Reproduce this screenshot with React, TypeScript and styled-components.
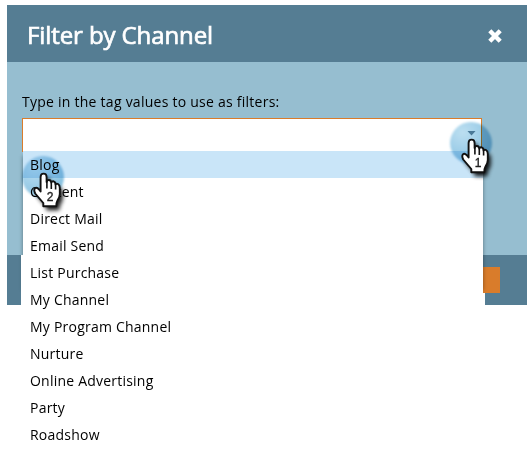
import React from "react";
import styled, { createGlobalStyle } from "styled-components";

const Global = createGlobalStyle`
  * { box-sizing: border-box; }
  body { margin: 0; background: #fff; overflow: hidden; font-family: "Open Sans", sans-serif; color: #000; }
`;
const Page = styled.main`
  width: 531px; height: 463px; padding: 5px 4px 0 7px; position: relative; overflow: hidden;
`;
const Dialog = styled.section`
  height: 300px; display: flex; flex-direction: column; background: #96bed0;
`;
const Header = styled.header`
  height: 57px; padding: 0 25px 0 20px; background: #557d93;
  display: flex; align-items: center; justify-content: space-between;
`;
const Title = styled.h1`
  margin: 0; padding-top: 3px; color: #fff; font-size: 24px; font-weight: 400; line-height: 32px;
  letter-spacing: -0.1px; -webkit-text-stroke: 0.7px #fff;
`;
const CloseButton = styled.button`
  width: 14px; height: 14px; margin-top: 5px; padding: 0; border: 0; background: none; display: block;
  svg { display: block; }
`;
const Body = styled.div`
  flex: 1; padding: 30px 15px 0;
`;
const Label = styled.label`
  display: block; height: 26px; font-size: 14px; line-height: 20px; letter-spacing: 0.25px;
`;
const Combo = styled.div`
  position: relative; width: 460px;
`;
const Field = styled.div`
  height: 34px; border: 1px solid #d97c2b; border-bottom: 0; background: #fff;
  display: flex; justify-content: flex-end; padding: 12px 5px 0 0;
  svg { display: block; }
`;
const Menu = styled.ul`
  position: absolute; top: 33px; left: 1px; z-index: 2; width: 460px; height: 312px;
  margin: 0; padding: 0; list-style: none; background: #fff;
  &::before, &::after { content: ""; position: absolute; width: 2px; background: #fff; }
  &::before { left: -2px; top: 104px; height: 60px; }
  &::after { right: -2px; top: 142px; height: 22px; }
`;
const Shade = styled.div`
  position: absolute; top: 38px; left: 1px; width: 460px; height: 134px;
  box-shadow: 0 0 4px rgba(0, 0, 0, .4);
`;
const Option = styled.li<{ $active?: boolean }>`
  height: 27px; padding-left: 7px; font-size: 14px; line-height: 27px; letter-spacing: 0.22px;
  background: ${(p) => (p.$active ? "#c9e5f8" : "#fff")};
`;
const Footer = styled.footer`
  height: 50px; padding: 12px 27px 12px 0; background: #557d93; display: flex; justify-content: flex-end;
`;
const Apply = styled.button`
  width: 70px; height: 26px; border: 0; background: #d97c2b;
`;
const Layer = styled.svg<{ $x: number; $y: number; $multiply?: boolean }>`
  position: absolute; z-index: 4; left: ${(p) => p.$x}px; top: ${(p) => p.$y}px; overflow: visible;
  mix-blend-mode: ${(p) => (p.$multiply ? "multiply" : "normal")};
`;

const HAND =
  "M23.600 39.500V25Q23.600 21.600 26.600 21.600T29.600 25V30Q29.800 28 31.800 28Q34 28 34.200 30.500Q35 29 36.500 29.300Q38.500 29.800 38.500 32.500Q39.500 31.300 41 32Q42.800 33 42.800 36V42Q42.800 45 40.500 48.500Q39.300 50.500 39.300 54.300H26.300V51L18.200 41.500Q16.300 37.500 18.300 36Q20.300 35 23.600 39.500Z";

function Pointer({ n, x, y }: { n: number; x: number; y: number }) {
  return (
    <>
      <Layer $x={x} $y={y} $multiply width="60" height="66" viewBox="0 0 60 66">
        <defs>
          <radialGradient id={`halo${n}`} cx=".3" cy=".25" r=".8">
            <stop offset="0" stopColor="#bcdff1" />
            <stop offset=".5" stopColor="#a2d0e9" />
            <stop offset="1" stopColor="#86c0df" />
          </radialGradient>
          <filter id={`soft${n}`}><feGaussianBlur stdDeviation=".8" /></filter>
        </defs>
        <circle cx="25" cy="25" r="21" fill={`url(#halo${n})`} filter={`url(#soft${n})`} />
      </Layer>
      <Layer $x={x - 1} $y={y} width="60" height="66" viewBox="0 0 60 66">
        <defs>
          <filter id={`blur${n}`} x="-40%" y="-40%" width="180%" height="180%">
            <feGaussianBlur stdDeviation="2.2" />
          </filter>
        </defs>
        <path transform="translate(3 4)" filter={`url(#blur${n})`} opacity=".9" d={HAND} />
        <path d={HAND} fill="#fff" stroke="#111" strokeWidth="1.9" strokeLinejoin="round" />
        <path d="M29.900 29v7.500M34.300 30.500v6.500M38.600 32.500v5" stroke="#111" strokeWidth="1.6" fill="none" />
        <text x="33" y="49" textAnchor="middle" fontFamily="Liberation Sans, sans-serif" fontSize="12" stroke="#222" strokeWidth=".35" fill="#222">{n}</text>
      </Layer>
    </>
  );
}

const options = ["Blog", "Content", "Direct Mail", "Email Send", "List Purchase", "My Channel", "My Program Channel", "Nurture", "Online Advertising", "Party", "Roadshow"];

export default function App() {
  return (
    <Page>
      <Global />
      <Dialog>
        <Header>
          <Title>Filter by Channel</Title>
          <CloseButton aria-label="Close">
            <svg width="14" height="14" viewBox="0 0 14 14"><path d="M1.800 1.800l10.400 10.400M12.200 1.800L1.800 12.200" stroke="#fff" strokeWidth="4.400" /></svg>
          </CloseButton>
        </Header>
        <Body>
          <Label>Type in the tag values to use as filters:</Label>
          <Combo>
            <Field><svg width="9" height="5" viewBox="0 0 9 5"><path d="M.5 0h8L4.500 4.500z" fill="#6b8fa3" /></svg></Field>
            <Shade />
            <Menu>{options.map((o, i) => <Option key={o} $active={i === 0}>{o}</Option>)}</Menu>
          </Combo>
        </Body>
        <Footer><Apply aria-label="Apply" /></Footer>
      </Dialog>
      <Pointer n={1} x={446} y={118} />
      <Pointer n={2} x={18} y={152} />
    </Page>
  );
}
